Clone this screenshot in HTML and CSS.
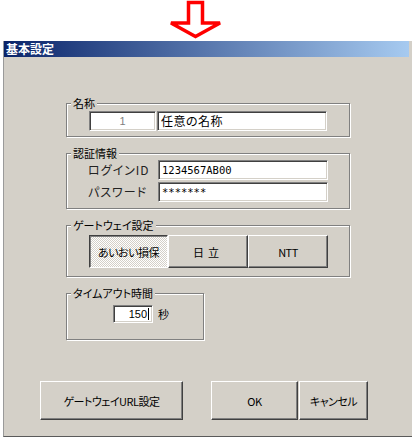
FILE: index.html
```html
<!DOCTYPE html>
<html lang="ja">
<head>
    <meta charset="UTF-8">
    <meta name="viewport" content="width=device-width, initial-scale=1.0">
    <title>基本設定</title>
    <link rel="stylesheet" href="styles.css">
</head>
<body>
    <!-- 矢印 -->
    <div class="arrow-row">
        <svg class="arrow" width="56" height="39" viewBox="0 0 56 39">
            <polygon points="21.5,2.5 35.5,2.5 35.5,23 53,23 28.5,36.5 4,23 21.5,23" fill="#fff" stroke="#f00" stroke-width="3.5"/>
        </svg>
    </div>

    <!-- ダイアログ -->
    <div class="window">
        <div class="titlebar">基本設定</div>
        <div class="client">
            <div class="groups">
                <fieldset class="group">
                    <legend>名称</legend>
                    <div class="group-body name-body">
                        <div class="field field-no">1</div>
                        <div class="field field-text">任意の名称</div>
                    </div>
                </fieldset>

                <fieldset class="group group-auth">
                    <legend>認証情報</legend>
                    <div class="group-body auth-body">
                        <div class="label">ログインID</div>
                        <div class="field field-mono">1234567AB00</div>
                        <div class="label">パスワード</div>
                        <div class="field field-mono">*******</div>
                    </div>
                </fieldset>

                <fieldset class="group group-gateway">
                    <legend>ゲートウェイ設定</legend>
                    <div class="group-body gateway-body">
                        <div class="btn btn-gw pressed">あいおい損保</div>
                        <div class="btn btn-gw wide">日立</div>
                        <div class="btn btn-gw">NTT</div>
                    </div>
                </fieldset>

                <fieldset class="group group-timeout">
                    <legend>タイムアウト時間</legend>
                    <div class="group-body timeout-body">
                        <div class="field field-num">150<span class="caret"></span></div>
                        <span class="unit">秒</span>
                    </div>
                </fieldset>
            </div>

            <div class="actions">
                <div class="btn btn-url">ゲートウェイURL設定</div>
                <div class="btn btn-ok">OK</div>
                <div class="btn btn-cancel">キャンセル</div>
            </div>
        </div>
    </div>
</body>
</html>
```

FILE: styles.css
```css
body {
    margin: 0;
    height: 438px;
    overflow: hidden;
    background: #fff;
    color: #000;
    font-family: "Noto Sans CJK JP", sans-serif;
    font-size: 12px;
    font-feature-settings: "palt";
}

.arrow-row {
    height: 41px;
}

.arrow {
    display: block;
    margin-left: 167px;
}

.window {
    box-sizing: border-box;
    width: 409px;
    height: 396px;
    margin-left: 3px;
    border-left: 1px solid #9a9a9a;
    border-bottom: 1px solid #5a5a5a;
    background: #d4d0c8;
}

.titlebar {
    height: 16px;
    margin-right: 3px;
    padding-left: 2px;
    background: linear-gradient(90deg, #0a246a, #a6caf0);
    color: #fff;
    font-weight: bold;
    font-size: 12px;
    line-height: 16px;
}

.client {
    padding-top: 39px;
}

.groups {
    padding-left: 62px;
}

/* グループ枠 */
.group {
    box-sizing: border-box;
    width: 284px;
    min-width: 0;
    margin: 9px 0 0;
    padding: 0;
    border: 1px solid #808080;
    box-shadow: inset 1px 1px #fff, 1px 1px #fff;
}

.group:first-child {
    margin-top: 0;
}

.group legend {
    margin-left: 4px;
    padding: 0 2px;
    font-size: 11px;
    line-height: 14px;
    background: #d4d0c8;
}

.field {
    box-sizing: border-box;
    height: 20px;
    padding: 0 3px;
    border: 1px solid;
    border-color: #808080 #fff #fff #808080;
    box-shadow: inset 1px 1px #404040, inset -1px -1px #d4d0c8;
    background: #fff;
    line-height: 18px;
    white-space: nowrap;
}

.name-body {
    display: flex;
    gap: 1px;
    padding: 1px 0 5px 22px;
}

.field-no {
    width: 67px;
    text-align: center;
    color: #808080;
    font-family: "Liberation Sans", sans-serif;
    font-size: 11px;
}

.field-text {
    width: 170px;
    font-size: 12px;
    letter-spacing: 0.5px;
}

.auth-body {
    display: grid;
    grid-template-columns: 63px 170px;
    column-gap: 7px;
    row-gap: 2px;
    padding: 0 0 6px 21px;
}

.label {
    line-height: 20px;
    font-size: 12px;
    letter-spacing: 1px;
    color: #222;
    white-space: nowrap;
}

.field-mono {
    font-family: "DejaVu Sans Mono", monospace;
    font-size: 10.5px;
}

/* ボタン */
.btn {
    box-sizing: border-box;
    display: flex;
    align-items: center;
    justify-content: center;
    border: 1px solid;
    border-color: #fff #404040 #404040 #fff;
    box-shadow: inset -1px -1px #808080;
    background: #d4d0c8;
    font-size: 11px;
    letter-spacing: -0.5px;
    white-space: nowrap;
}

.btn.pressed {
    border-color: #404040 #fff #fff #404040;
    box-shadow: inset 1px 1px #808080;
    background: repeating-conic-gradient(#fff 0 25%, #d4d0c8 0 50%) 0 0 / 2px 2px;
}

.gateway-body {
    display: flex;
    padding: 3px 0 8px 22px;
}

.btn-gw {
    width: 80px;
    height: 33px;
}

.btn-gw.pressed {
    width: 79px;
}

.btn-gw.wide {
    letter-spacing: 4px;
}

.group-timeout {
    width: 138px;
}

.timeout-body {
    display: flex;
    align-items: center;
    padding: 5px 0 16px 46px;
}

.field-num {
    width: 40px;
    height: 18px;
    padding: 0 3px 0 0;
    text-align: right;
    font-family: "Liberation Sans", sans-serif;
    font-size: 11px;
    line-height: 16px;
}

.caret {
    display: inline-block;
    width: 1px;
    height: 12px;
    margin-left: 1px;
    vertical-align: -2px;
    background: #000;
}

.unit {
    margin-left: 5px;
    font-size: 11px;
}

.actions {
    display: flex;
    margin-top: 41px;
    padding-left: 36px;
}

.actions .btn {
    height: 39px;
}

.btn-url {
    width: 143px;
}

.btn-ok {
    width: 87px;
    margin-left: 28px;
}

.btn-cancel {
    width: 69px;
    margin-left: 1px;
}
```
